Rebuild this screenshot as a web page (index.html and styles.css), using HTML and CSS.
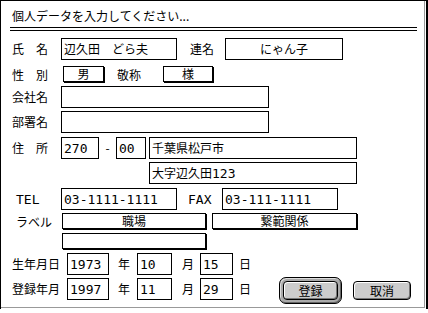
FILE: index.html
```html
<!DOCTYPE html>
<html lang="ja">
<head>
    <meta charset="UTF-8">
    <title>個人データ</title>
    <link rel="stylesheet" href="styles.css">
</head>
<body>

    <div class="window">
        <div class="title">個人データを入力してください...</div>
        <div class="rule"></div>

        <div class="form">
            <div class="row">
                <span class="label">氏　名</span>
                <div class="field w116">辺久田　どら夫</div>
                <span class="sublabel">連名</span>
                <div class="field w118 center">にゃん子</div>
            </div>

            <div class="row pops gap-top3">
                <span class="label">性　別</span>
                <div class="popup sex">男</div>
                <span class="honor-label">敬称</span>
                <div class="popup honor">様</div>
            </div>

            <div class="row">
                <span class="label">会社名</span>
                <div class="field w208"></div>
            </div>

            <div class="row">
                <span class="label">部署名</span>
                <div class="field w208"></div>
            </div>

            <div class="row gap-top1">
                <span class="label">住　所</span>
                <div class="field w38"><span class="num">270</span></div>
                <span class="dash">-</span>
                <div class="field w30"><span class="num">00</span></div>
                <div class="field w208 addr">千葉県松戸市</div>
            </div>

            <div class="row">
                <div class="field w208 addr2">大字辺久田<span class="num">123</span></div>
            </div>

            <div class="row gap-top1">
                <span class="label latin"><span class="num">TEL</span></span>
                <div class="field w116"><span class="num">03-1111-1111</span></div>
                <span class="fax-label"><span class="num">FAX</span></span>
                <div class="field w116"><span class="num">03-111-1111</span></div>
            </div>

            <div class="row pops">
                <span class="label latin">ラベル</span>
                <div class="popup wide">職場</div>
                <div class="popup wide2">繋範関係</div>
            </div>

            <div class="row pops">
                <div class="popup wide solo"></div>
            </div>

            <div class="row">
                <span class="label date-label">生年月日</span>
                <div class="field w42"><span class="num">1973</span></div>
                <span class="unit u-year">年</span>
                <div class="field w35"><span class="num">10</span></div>
                <span class="unit u-month">月</span>
                <div class="field w33"><span class="num">15</span></div>
                <span class="unit u-day">日</span>
            </div>

            <div class="row">
                <span class="label date-label">登録年月</span>
                <div class="field w42"><span class="num">1997</span></div>
                <span class="unit u-year">年</span>
                <div class="field w35"><span class="num">11</span></div>
                <span class="unit u-month">月</span>
                <div class="field w33"><span class="num">29</span></div>
                <span class="unit u-day">日</span>

                <div class="buttons">
                    <div class="default-ring">
                        <button class="btn ok">登録</button>
                    </div>
                    <button class="btn cancel">取消</button>
                </div>
            </div>
        </div>
    </div>

</body>
</html>
```

FILE: styles.css
```css
body {
    margin: 0;
    background: #fff;
    font-family: "Noto Sans CJK JP", sans-serif;
    font-size: 12px;
    color: #000;
}
.window {
    box-sizing: border-box;
    width: 426px;
    height: 309px;
    background: #fff;
    border-left: 1px solid #000;
    border-top: 1px solid #000;
    box-shadow: inset -1px -1px 0 #fff, inset -2px -2px 0 #999, 2px 4px 0 #000, 2px 0 0 #000;
}
.title {
    padding: 8px 0 0 11px;
    height: 14px;
    line-height: 14px;
}
.rule {
    margin: 4px 0 0 9px;
    width: 407px;
    height: 2px;
    border-top: 1px solid #000;
    border-bottom: 1px solid #000;
}
.form {
    display: flex;
    flex-direction: column;
    gap: 3px;
    margin-top: 7px;
    padding-left: 11px;
}
.row {
    display: flex;
    align-items: center;
    height: 22px;
    line-height: 14px;
}
.row.pops {
    height: 17px;
    align-items: flex-start;
}
.gap-top3 {
    margin-top: 3px;
}
.gap-top1 {
    margin-top: 1px;
}
.num {
    font-family: "DejaVu Sans Mono", monospace;
    font-size: 13px;
}
.label {
    width: 49px;
    flex: none;
    white-space: nowrap;
}
.row.pops .label {
    align-self: center;
}
.label.latin {
    padding-left: 4px;
    width: 45px;
}
.label.date-label {
    width: 55px;
}
.field {
    box-sizing: border-box;
    height: 22px;
    border: 1px solid #000;
    padding: 3px 2px 0;
    line-height: 14px;
    white-space: nowrap;
    flex: none;
}
.center {
    text-align: center;
}
.w116 { width: 116px; }
.w118 { width: 118px; }
.w208 { width: 208px; }
.w38 { width: 38px; }
.w30 { width: 30px; }
.w42 { width: 42px; }
.w35 { width: 35px; }
.w33 { width: 33px; }
.sublabel {
    margin-left: 13px;
    width: 35px;
}
.fax-label {
    margin-left: 11px;
    width: 34px;
}
.dash {
    width: 17px;
    text-align: center;
}
.addr {
    margin-left: 3px;
}
.addr2 {
    margin-left: 137px;
}
.popup {
    box-sizing: border-box;
    height: 16px;
    border: 1px solid #000;
    box-shadow: 1px 1px 0 #000;
    text-align: center;
    line-height: 14px;
    flex: none;
}
.popup.sex {
    margin-left: 2px;
    width: 41px;
}
.honor-label {
    margin-left: 13px;
    width: 24px;
    align-self: center;
}
.popup.honor {
    margin-left: 22px;
    width: 50px;
}
.popup.wide {
    margin-left: 1px;
    width: 144px;
}
.popup.wide2 {
    margin-left: 6px;
    width: 145px;
}
.popup.solo {
    margin-left: 50px;
}
.unit {
    width: 12px;
    flex: none;
}
.u-year {
    margin: 0 7px 0 9px;
}
.u-month {
    margin: 0 6px 0 10px;
}
.u-day {
    margin-left: 6px;
}
.buttons {
    display: flex;
    align-items: center;
    margin-left: 28px;
    margin-top: 3px;
}
.default-ring {
    box-sizing: border-box;
    width: 63px;
    height: 27px;
    padding: 3px;
    border: 1px solid #000;
    border-radius: 7px;
    background: #aaa;
    box-shadow: inset 1px 1px 0 #ddd, inset -1px -1px 0 #666;
}
.btn {
    box-sizing: border-box;
    display: block;
    height: 19px;
    margin: 0;
    padding: 0;
    border: 1px solid #000;
    border-radius: 4px;
    background: #ccc;
    box-shadow: inset 1px 1px 0 #fff, inset -1px -1px 0 #777;
    font-family: "Noto Sans CJK JP", sans-serif;
    font-size: 12px;
    line-height: 15px;
    color: #000;
}
.btn.ok {
    width: 55px;
}
.btn.cancel {
    width: 58px;
    margin-left: 11px;
}
```
